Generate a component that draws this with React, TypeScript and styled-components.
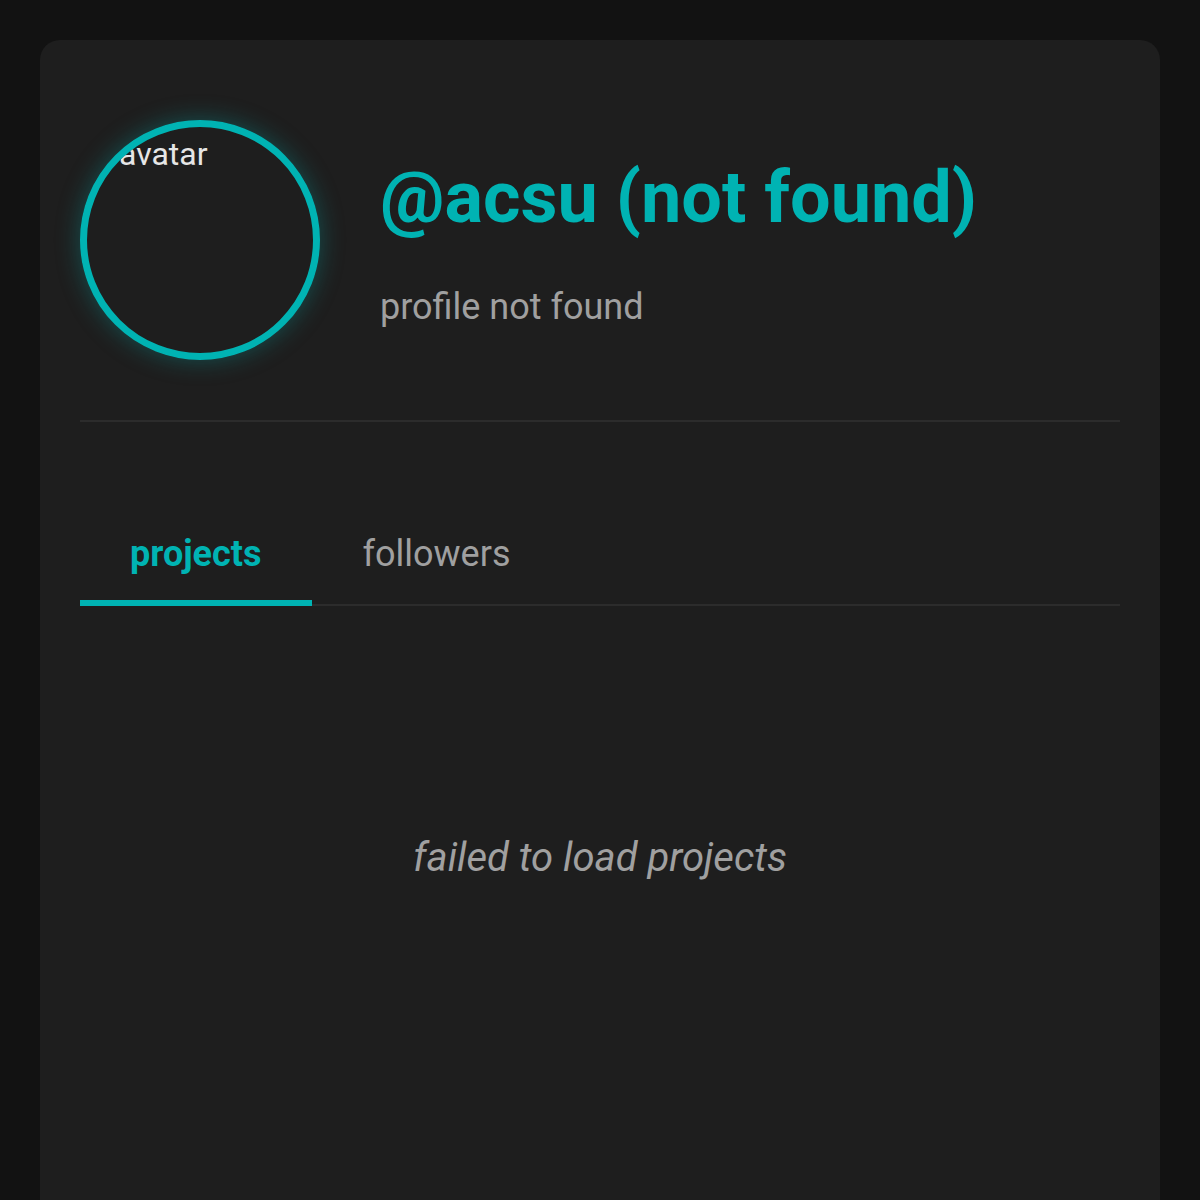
import React, { useState } from 'react'
import styled, { createGlobalStyle } from 'styled-components'

const GlobalStyle = createGlobalStyle`
  html, body {
    margin: 0;
    padding: 0;
    background: #121212;
  }

  body {
    font-family: Roboto, 'Noto Sans', 'Liberation Sans', sans-serif;
    padding: 40px;
  }
`

const teal = '#00b3b3'

const Card = styled.main`
  background: #1e1e1e;
  border-radius: 20px;
  padding: 80px 40px;
  min-height: 1300px;
  box-sizing: border-box;
`

const Header = styled.section`
  display: flex;
  align-items: center;
  gap: 60px;
  padding-bottom: 60px;
  border-bottom: 2px solid #2c2c2c;
`

const Avatar = styled.div`
  flex: none;
  width: 240px;
  height: 240px;
  box-sizing: border-box;
  border: 7px solid ${teal};
  border-radius: 50%;
  overflow: hidden;
  box-shadow: 0 0 24px rgba(0, 179, 179, 0.35);
  padding: 9px 0 0 32px;
`

const AltText = styled.span`
  display: block;
  color: #e6e6e6;
  font-size: 32px;
  line-height: 36px;
  white-space: nowrap;
`

const Info = styled.div`
  display: flex;
  flex-direction: column;
  gap: 44px;
  padding-top: 4px;
`

const Title = styled.h1`
  margin: 0;
  font-size: 72px;
  font-weight: 700;
  line-height: 1.2;
  color: ${teal};
`

const Subtitle = styled.p`
  margin: 0;
  font-size: 36px;
  line-height: 1.2;
  color: #a0a0a0;
`

const TabList = styled.nav`
  display: flex;
  margin-top: 80px;
  border-bottom: 2px solid #2c2c2c;
`

const Tab = styled.button<{ $active?: boolean }>`
  background: none;
  border: none;
  border-bottom: 6px solid ${(p) => (p.$active ? teal : 'transparent')};
  margin-bottom: -2px;
  padding: 31px 50px 25px 50px;
  font-family: inherit;
  font-size: 36px;
  line-height: 42px;
  font-weight: ${(p) => (p.$active ? 700 : 400)};
  color: ${(p) => (p.$active ? teal : '#a0a0a0')};
  cursor: pointer;

  &:first-child {
    padding-right: 51px;
  }
`

const EmptyState = styled.p`
  margin: 0;
  padding: 230px 0;
  text-align: center;
  font-size: 40px;
  line-height: 44px;
  font-style: italic;
  color: #a0a0a0;
`

const tabs = ['projects', 'followers']

const App = () => {
  const [active, setActive] = useState('projects')

  return (
    <>
      <GlobalStyle />
      <Card>
        <Header>
          <Avatar>
            <AltText>avatar</AltText>
          </Avatar>
          <Info>
            <Title>@acsu (not found)</Title>
            <Subtitle>profile not found</Subtitle>
          </Info>
        </Header>

        <TabList>
          {tabs.map((t) => (
            <Tab key={t} $active={active === t} onClick={() => setActive(t)}>
              {t}
            </Tab>
          ))}
        </TabList>

        <EmptyState>{`failed to load ${active}`}</EmptyState>
      </Card>
    </>
  )
}

export default App
